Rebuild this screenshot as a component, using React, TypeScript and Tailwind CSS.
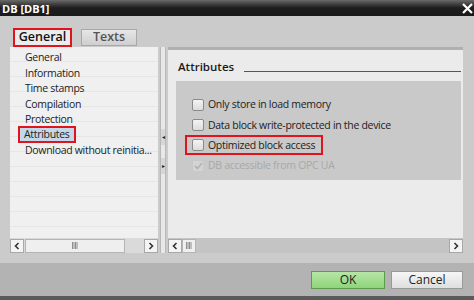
import React from "react";

const listItems = [
  "General",
  "Information",
  "Time stamps",
  "Compilation",
  "Protection",
  "Attributes",
  "Download without reinitia...",
];

const attrs = [
  { label: "Only store in load memory", checked: false, disabled: false },
  { label: "Data block write-protected in the device", checked: false, disabled: false },
  { label: "Optimized block access", checked: false, disabled: false, marked: true },
  { label: "DB accessible from OPC UA", checked: true, disabled: true },
];

const ScrollBtn = ({ dir }: { dir: "l" | "r" }) => (
  <div className="w-[14px] h-[14px] border border-[#a8a8a8] bg-[#f4f4f4] flex items-center justify-center text-[#333]">
    <svg width="6" height="8" viewBox="0 0 6 8">
      {dir === "l" ? (
        <path d="M4.5 1 L1.5 4 L4.5 7" stroke="#333" strokeWidth="1.6" fill="none" />
      ) : (
        <path d="M1.5 1 L4.5 4 L1.5 7" stroke="#333" strokeWidth="1.6" fill="none" />
      )}
    </svg>
  </div>
);

const Grip = () => (
  <svg width="6" height="7" viewBox="0 0 6 7">
    <path d="M0.5 0 V7 M2 0 V7 M3.5 0 V7 M5 0 V7" stroke="#777" strokeWidth="0.8" />
  </svg>
);

const Check = ({ checked, disabled }: { checked: boolean; disabled: boolean }) => (
  <div
    className={`w-[12px] h-[12px] rounded-[2px] border flex items-center justify-center ${
      disabled ? "border-[#c8c8c8] bg-[#d4d4d4]" : "border-[#8a8a8a] bg-gradient-to-b from-[#f4f4f4] to-[#dcdcdc]"
    }`}
  >
    {checked && (
      <svg width="9" height="8" viewBox="0 0 9 8">
        <path d="M1 4 L3.5 6.5 L8 1" stroke="#b4b4b4" strokeWidth="1.8" fill="none" />
      </svg>
    )}
  </div>
);

const App = () => {
  return (
    <div
      className="w-[474px] h-[300px] flex flex-col bg-[#cbcbcb] overflow-hidden"
      style={{ fontFamily: "'Open Sans', 'Noto Sans', sans-serif" }}
    >
      {/* title bar */}
      <div className="h-[16px] bg-gradient-to-b from-[#6a6a6a] via-[#1e1e1e] to-[#1a1a1a] flex items-center justify-between">
        <span className="text-white font-bold text-[11px] leading-none pl-[2px]">DB [DB1]</span>
        <div className="w-[14px] h-[16px] flex items-center justify-center">
          <svg width="11" height="11" viewBox="0 0 11 11">
            <path d="M1 1 L10 10 M10 1 L1 10" stroke="#fff" strokeWidth="2.2" />
          </svg>
        </div>
      </div>

      {/* tabs */}
      <div className="h-[31px] flex items-end pl-[13px] gap-[9px]">
        <div className="h-[19px] w-[59px] border-2 border-[#e0141e] bg-[#ececec] flex items-center justify-center text-[12.5px] font-semibold text-[#111]">
          General
        </div>
        <div className="h-[17px] w-[56px] mb-[1px] border border-[#a8a8a8] bg-gradient-to-b from-[#e6e6e6] to-[#cfcfcf] flex items-center justify-center text-[12.5px] font-semibold text-[#555]">
          Texts
        </div>
      </div>

      {/* main panes */}
      <div className="flex pl-[10px] pr-[11px] h-[206px]">
        {/* left list */}
        <div className="w-[148px] flex flex-col bg-[#f0f0f0]">
          <div className="flex-1 pt-[3px] pl-[15px] bg-[repeating-linear-gradient(to_bottom,#f0f0f0_0px,#f0f0f0_14px,#e6e6e6_14px,#e6e6e6_15px)]">
            {listItems.map((t) => (
              <div
                key={t}
                className="h-[15.4px] flex items-center text-[10.5px] tracking-[-0.3px] text-[#222] leading-none whitespace-nowrap"
              >
                {t === "Attributes" ? (
                  <span className="-ml-[7px] border-2 border-[#e0141e] bg-[#c4d8ea] px-[4px] h-[17px] flex items-center">
                    {t}
                  </span>
                ) : (
                  t
                )}
              </div>
            ))}
          </div>
          <div className="h-[15px] flex items-center bg-[#dadada]">
            <ScrollBtn dir="l" />
            <div className="ml-[1px] w-[100px] h-[14px] border border-[#b4b4b4] bg-[#efefef] flex items-center justify-center">
              <Grip />
            </div>
            <div className="flex-1" />
            <ScrollBtn dir="r" />
          </div>
        </div>

        {/* splitter */}
        <div className="w-[10px] flex">
          <div className="w-[6px] ml-[2px] bg-[#e8e8e8] border-x border-[#b8b8b8] flex flex-col items-center">
            <div className="h-[82px]" />
            <div className="h-[16px] w-full bg-[#d6d6d6] flex items-center justify-center text-[6px] text-[#222]">◂</div>
            <div className="h-[13px]" />
            <div className="h-[16px] w-full bg-[#d6d6d6] flex items-center justify-center text-[6px] text-[#222]">▸</div>
          </div>
        </div>

        {/* right pane */}
        <div className="flex-1 flex flex-col bg-[#ebebeb] border-t-[3px] border-[#b0b0b0]">
          <div className="flex-1 pl-[10px] pr-[2px] pt-[11px]">
            <div className="flex items-end gap-[10px]">
              <span className="text-[11.5px] font-semibold text-[#1a1a1a] leading-none">Attributes</span>
              <div className="flex-1 border-b border-[#555] mb-[1px]" />
            </div>
            <div className="mt-[8px] -ml-[2px] h-[99px] bg-[#c9c9c9] pl-[16px] pt-[14px] flex flex-col">
              {attrs.map((a) => (
                <div key={a.label} className="h-[20.3px] flex items-center">
                  <div
                    className={`flex items-center gap-[4px] h-[20px] ${
                      a.marked ? "-ml-[7px] pl-[5px] pr-[6px] border-2 border-[#e0141e]" : ""
                    }`}
                  >
                    <Check checked={a.checked} disabled={a.disabled} />
                    <span
                      className={`text-[10.5px] tracking-[-0.3px] leading-none whitespace-nowrap ${
                        a.disabled ? "text-[#a8a8a8]" : "text-[#222]"
                      }`}
                    >
                      {a.label}
                    </span>
                  </div>
                </div>
              ))}
            </div>
          </div>
          <div className="h-[15px] flex items-center bg-[#c4c4c4]">
            <ScrollBtn dir="l" />
            <div className="w-[14px] h-[14px] border border-[#b4b4b4] bg-[#efefef] flex items-center justify-center">
              <Grip />
            </div>
            <div className="flex-1" />
            <ScrollBtn dir="r" />
          </div>
        </div>
      </div>

      <div className="h-[10px]" />

      {/* bottom buttons */}
      <div className="flex-1 bg-[#b3b3b3] flex items-center justify-end gap-[6px] pr-[11px] pt-[1px]">
        <div className="w-[74px] h-[18px] border border-[#5c9a4e] bg-gradient-to-b from-[#b6e6a6] to-[#8ed47a] flex items-center justify-center text-[12px] text-[#222]">
          OK
        </div>
        <div className="w-[72px] h-[18px] border border-[#9a9a9a] bg-gradient-to-b from-[#f6f6f6] to-[#dedede] flex items-center justify-center text-[12px] text-[#222]">
          Cancel
        </div>
      </div>
      <div className="h-[4px] bg-[#5a5a5a]" />
    </div>
  );
};

export default App;
